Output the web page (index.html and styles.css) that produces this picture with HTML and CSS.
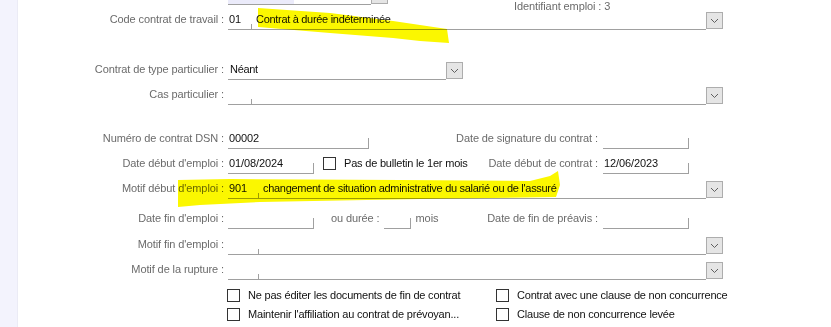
FILE: index.html
```html
<!DOCTYPE html>
<html lang="fr">
<head>
    <meta charset="UTF-8">
    <title>Contrat de travail</title>
    <link rel="stylesheet" href="styles.css">
</head>
<body>
<div class="window">
    <div class="sidebar"></div>

    <div class="form">
        <!-- row cut by the scroll -->
        <div class="row">
            <span class="label"></span>
            <div class="combo combo-top">
                <div class="combo-text"><span class="selection"></span></div>
                <span class="drop"><svg width="15" height="15"><polyline points="4,6 7.5,9.5 11,6"/></svg></span>
            </div>
            <span class="info">Identifiant emploi : 3</span>
        </div>

        <div class="row">
            <span class="label">Code contrat de travail :</span>
            <div class="combo combo-wide">
                <div class="combo-text">
                    <span class="code code-sm">01</span>
                    <span class="value">Contrat à durée indéterminée</span>
                </div>
                <span class="drop"><svg width="15" height="15"><polyline points="4,6 7.5,9.5 11,6"/></svg></span>
            </div>
        </div>

        <div class="row gap-xl">
            <span class="label">Contrat de type particulier :</span>
            <div class="combo combo-mid">
                <div class="combo-text"><span class="value plain">Néant</span></div>
                <span class="drop"><svg width="15" height="15"><polyline points="4,6 7.5,9.5 11,6"/></svg></span>
            </div>
        </div>

        <div class="row">
            <span class="label">Cas particulier :</span>
            <div class="combo combo-wide">
                <div class="combo-text"><span class="code code-sm"></span></div>
                <span class="drop"><svg width="15" height="15"><polyline points="4,6 7.5,9.5 11,6"/></svg></span>
            </div>
        </div>

        <div class="row gap-lg">
            <span class="label">Numéro de contrat DSN :</span>
            <div class="mid">
                <span class="field field-dsn">00002</span>
                <span class="rlabel">Date de signature du contrat :</span>
            </div>
            <span class="field field-date"></span>
        </div>

        <div class="row">
            <span class="label">Date début d'emploi :</span>
            <div class="mid">
                <span class="field field-date">01/08/2024</span>
                <span class="check check-inline"></span>
                <span class="check-text">Pas de bulletin le 1er mois</span>
                <span class="rlabel">Date début de contrat :</span>
            </div>
            <span class="field field-date">12/06/2023</span>
        </div>

        <div class="row">
            <span class="label">Motif début d'emploi :</span>
            <div class="combo combo-wide">
                <div class="combo-text">
                    <span class="code">901</span>
                    <span class="value">changement de situation administrative du salarié ou de l'assuré</span>
                </div>
                <span class="drop"><svg width="15" height="15"><polyline points="4,6 7.5,9.5 11,6"/></svg></span>
            </div>
        </div>

        <div class="row gap-md">
            <span class="label">Date fin d'emploi :</span>
            <div class="mid">
                <span class="field field-date"></span>
                <span class="dur-label">ou durée :</span>
                <span class="field field-dur"></span>
                <span class="unit">mois</span>
                <span class="rlabel">Date de fin de préavis :</span>
            </div>
            <span class="field field-date"></span>
        </div>

        <div class="row gap-sm">
            <span class="label">Motif fin d'emploi :</span>
            <div class="combo combo-wide">
                <div class="combo-text"><span class="code"></span></div>
                <span class="drop"><svg width="15" height="15"><polyline points="4,6 7.5,9.5 11,6"/></svg></span>
            </div>
        </div>

        <div class="row">
            <span class="label">Motif de la rupture :</span>
            <div class="combo combo-wide">
                <div class="combo-text"><span class="code"></span></div>
                <span class="drop"><svg width="15" height="15"><polyline points="4,6 7.5,9.5 11,6"/></svg></span>
            </div>
        </div>

        <div class="row row-check">
            <span class="label"></span>
            <div class="check-col">
                <span class="check"></span>
                <span class="check-text">Ne pas éditer les documents de fin de contrat</span>
            </div>
            <div class="check-col">
                <span class="check"></span>
                <span class="check-text">Contrat avec une clause de non concurrence</span>
            </div>
        </div>

        <div class="row row-check gap-xs">
            <span class="label"></span>
            <div class="check-col">
                <span class="check"></span>
                <span class="check-text">Maintenir l'affiliation au contrat de prévoyan...</span>
            </div>
            <div class="check-col">
                <span class="check"></span>
                <span class="check-text">Clause de non concurrence levée</span>
            </div>
        </div>
    </div>

    <!-- highlighter strokes over the form -->
    <svg class="marker" width="831" height="327">
        <polygon points="258,8 330,13 393,21 447,29 449,43 420,41 393,38 330,33 258,27"/>
        <polygon points="178,180 230,179 400,180 530,181 550,176 558,171 560,185 556,197 420,199 260,202 200,205 178,207"/>
    </svg>
</div>
</body>
</html>
```

FILE: styles.css
```css
/* WinForms-like contract form */
body {
    margin: 0;
    background-color: #fff;
    font-family: "Liberation Sans", Arial, sans-serif;
    font-size: 11px;
    letter-spacing: -0.1px;
    overflow: hidden;
}

.window {
    position: relative;
    display: flex;
    width: 831px;
    height: 327px;
    overflow: hidden;
}

.sidebar {
    width: 17px;
    flex-shrink: 0;
    background-color: #f3f3fd;
    border-right: 1px solid #ebebf5;
}

.form {
    display: flex;
    flex-direction: column;
    margin-top: -13px; /* content is scrolled */
}

.row {
    display: flex;
    align-items: flex-start;
    height: 18px;
    margin-top: 7px;
    line-height: 15px;
}

.row:first-child { margin-top: 0; }
.gap-xs { margin-top: 3px; }
.gap-sm { margin-top: 8px; }
.gap-md { margin-top: 12px; }
.gap-lg { margin-top: 26px; }
.gap-xl { margin-top: 32px; }

.label {
    width: 206px;
    flex-shrink: 0;
    margin-right: 4px;
    text-align: right;
    color: #6b6b6b;
    white-space: nowrap;
}

/* combo boxes */
.combo {
    display: flex;
    height: 18px;
}
.combo-top { width: 160px; }
.combo-mid { width: 235px; }
.combo-wide { width: 495px; }

.combo-text {
    flex: 1;
    display: flex;
    box-sizing: border-box;
    height: 18px;
    border-bottom: 1px solid #a0a0a0;
    color: #111;
    white-space: nowrap;
}

.selection {
    width: 66px;
    height: 4px;
    margin-top: 13px;
    background-color: #ebebfa;
}

.code {
    width: 31px;
    flex-shrink: 0;
    padding-left: 1px;
    box-sizing: border-box;
    background: linear-gradient(#a0a0a0, #a0a0a0) no-repeat right bottom / 1px 5px;
}
.code-sm { width: 24px; }

.value {
    padding-left: 4px;
    letter-spacing: -0.3px;
}
.value.plain { padding-left: 2px; }

.drop {
    width: 17px;
    height: 17px;
    box-sizing: border-box;
    border: 1px solid #adadad;
    background-color: #e5e5e5;
}
.drop svg {
    display: block;
    fill: none;
    stroke: #606060;
    stroke-width: 1;
}

.info {
    margin-left: 126px;
    margin-top: 12px;
    color: #6b6b6b;
}

/* text boxes */
.mid {
    display: flex;
    align-items: flex-start;
    width: 370px;
    margin-right: 5px;
}

.field {
    display: block;
    box-sizing: border-box;
    height: 18px;
    padding-left: 1px;
    border-bottom: 1px solid #a0a0a0;
    background: linear-gradient(#a0a0a0, #a0a0a0) no-repeat right bottom / 1px 10px;
    color: #111;
}
.field-dsn { width: 141px; }
.field-date { width: 86px; }
.field-dur { width: 27px; }

.rlabel {
    margin-left: auto;
    color: #6b6b6b;
    white-space: nowrap;
}

.dur-label {
    margin-left: 17px;
    margin-right: 4px;
    color: #6b6b6b;
}
.unit {
    margin-left: 5px;
    color: #6b6b6b;
}

/* check boxes */
.check {
    width: 13px;
    height: 13px;
    box-sizing: border-box;
    flex-shrink: 0;
    border: 1px solid #333;
    background-color: #fff;
    margin-top: 2px;
}
.check-inline {
    margin-left: 9px;
    margin-top: 1px;
}

.check-text {
    margin-left: 8px;
    color: #111;
    white-space: nowrap;
    letter-spacing: -0.2px;
}

.row-check { height: 16px; }
.row-check .label { margin-right: 3px; }
.row-check .check-text { padding-top: 1px; }

.check-col {
    display: flex;
    align-items: flex-start;
    width: 269px;
}

.marker {
    position: absolute;
    top: 0;
    left: 0;
    pointer-events: none;
    mix-blend-mode: multiply;
}
.marker polygon { fill: #fbf700; }
```
